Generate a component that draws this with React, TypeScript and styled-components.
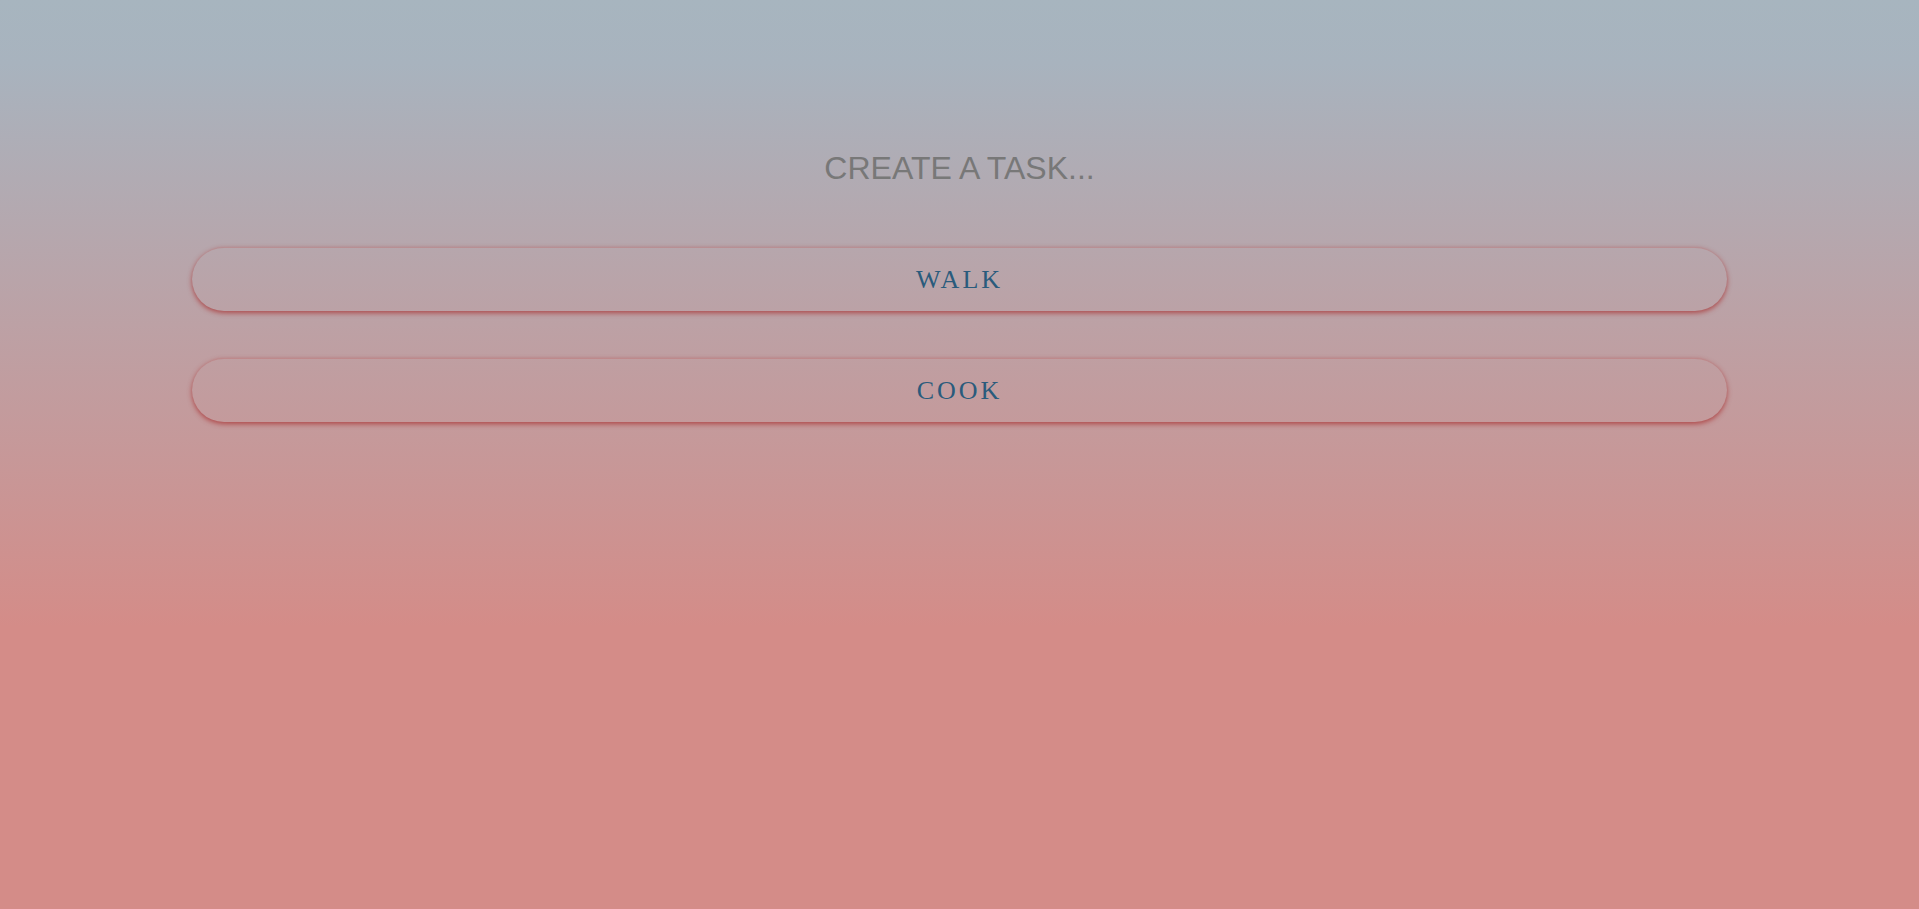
import React from "react";
import styled, { createGlobalStyle } from "styled-components";

const GlobalStyle = createGlobalStyle`
  html, body {
    margin: 0;
    padding: 0;
  }
  body {
    min-height: 100vh;
    background: linear-gradient(to bottom, #a7b5bf 0%, #a8b3be 7%, #d48c88 69%, #d48c88 100%);
    background-attachment: fixed;
  }
`;

const tasks = ["WALK", "COOK"];

export default function App() {
  return (
    <>
      <GlobalStyle />
      <Page>
        <Title>CREATE A TASK...</Title>
        <TaskList>
          {tasks.map((task) => (
            <Task key={task}>{task}</Task>
          ))}
        </TaskList>
      </Page>
    </>
  );
}

const Page = styled.div`
  display: flex;
  flex-direction: column;
  align-items: center;
  min-height: 100vh;
  padding-top: 151px;
  box-sizing: border-box;
`;

const Title = styled.div`
  font-family: "Liberation Sans", Arial, sans-serif;
  font-size: 32px;
  line-height: 34px;
  color: #787878;
  text-align: center;
`;

const TaskList = styled.div`
  display: flex;
  flex-direction: column;
  gap: 47px;
  width: 80%;
  margin-top: 62px;
`;

const Task = styled.div`
  display: flex;
  align-items: center;
  justify-content: center;
  height: 64px;
  box-sizing: border-box;
  border-radius: 32px;
  border-top: 1px solid rgba(190, 90, 90, 0.3);
  box-shadow: 0 2px 5px rgba(168, 46, 46, 0.75);
  font-family: "Liberation Serif", "Times New Roman", serif;
  font-size: 26px;
  letter-spacing: 3px;
  color: #2a5b7c;
`;
